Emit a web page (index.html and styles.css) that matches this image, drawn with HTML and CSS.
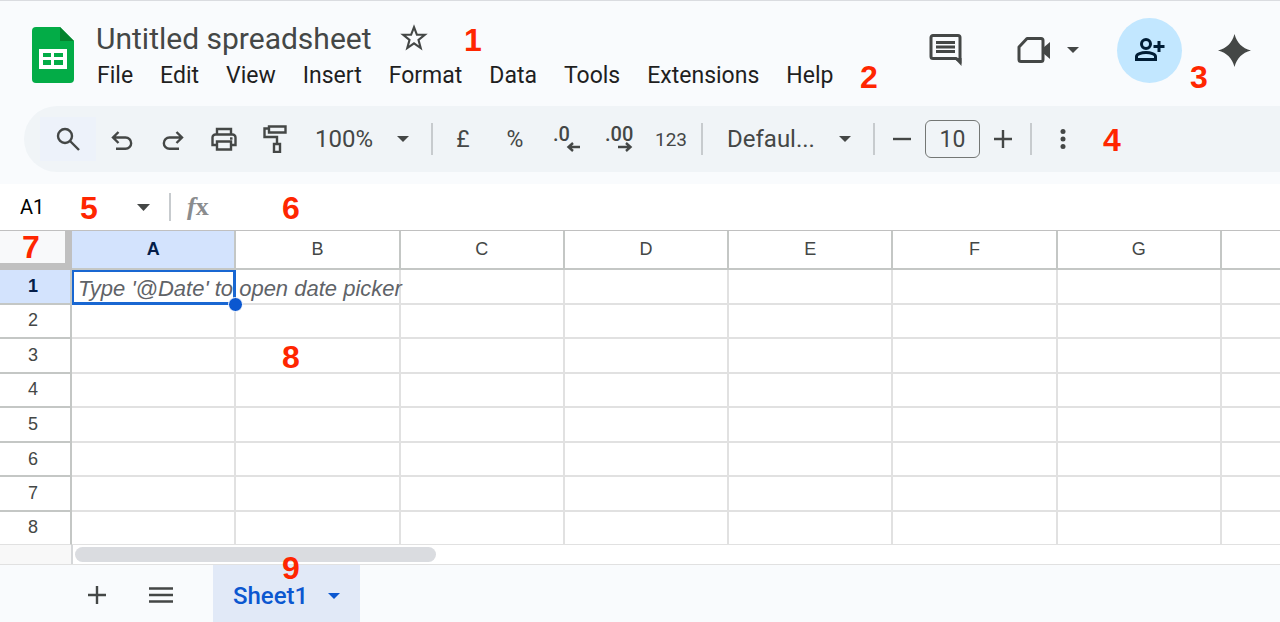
FILE: index.html
```html
<!DOCTYPE html>
<html lang="en">
<head>
  <meta charset="UTF-8">
  <meta name="viewport" content="width=device-width, initial-scale=1">
  <title>Untitled spreadsheet</title>
  <link rel="stylesheet" href="styles.css">
</head>
<body>
  <header class="header">
    <svg class="logo" width="42" height="56" viewBox="0 0 42 56" aria-hidden="true">
      <path d="M4 0h24l14 14v38a4 4 0 0 1-4 4H4a4 4 0 0 1-4-4V4a4 4 0 0 1 4-4z" fill="#03ac47"/>
      <path d="M28 0l14 14H28z" fill="#04832d"/>
      <path d="M7 22h28v20H7zM11 26v4h8v-4zM22 26v4h9v-4zM11 33v5h8v-5zM22 33v5h9v-5z" fill="#fff" fill-rule="evenodd"/>
    </svg>
    <div class="doc">
      <div class="title-row">
        <input class="title" type="text" value="Untitled spreadsheet" aria-label="Document name">
        <button class="icon-btn" aria-label="Star">
          <svg width="28" height="28" viewBox="0 0 26 26"><path d="M13 3l2.700 7h7.300l-5.800 4.800 2 7.500L13 18l-6.200 4.300 2-7.500L3 10h7.300z" fill="none" stroke="#444746" stroke-width="2"/></svg>
        </button>
      </div>
      <nav class="menu">
        <button>File</button>
        <button>Edit</button>
        <button>View</button>
        <button>Insert</button>
        <button>Format</button>
        <button>Data</button>
        <button>Tools</button>
        <button>Extensions</button>
        <button>Help</button>
      </nav>
    </div>
    <div class="actions">
      <button class="icon-btn" aria-label="Comments">
        <svg width="34" height="34" viewBox="0 0 34 34">
          <path d="M4 2.500h25a2 2 0 0 1 2 2V28l-4-2.500H4a2 2 0 0 1-2-2v-19a2 2 0 0 1 2-2z" fill="none" stroke="#444746" stroke-width="3"/>
          <path d="M25 25h7.500v8z" fill="#444746"/>
          <path d="M7 9.500h19M7 14h19M7 18.500h19" stroke="#444746" stroke-width="2.800"/>
        </svg>
      </button>
      <button class="icon-btn meet" aria-label="Join a call">
        <svg width="34" height="28" viewBox="0 0 34 28">
          <path d="M10 2.500h14a2 2 0 0 1 2 2v19a2 2 0 0 1-2 2H4a2 2 0 0 1-2-2V11z" fill="none" stroke="#444746" stroke-width="3" stroke-linejoin="round"/>
          <path d="M26 12l7-6v17l-7-6z" fill="#444746"/>
        </svg>
        <svg width="12" height="6" viewBox="0 0 12 6"><path d="M0 0h12L6 6z" fill="#444746"/></svg>
      </button>
      <button class="share" aria-label="Share">
        <svg width="31" height="24" viewBox="0 0 31 24" fill="none" stroke="#001d35" stroke-width="3">
          <circle cx="12" cy="6" r="4.500"/>
          <path d="M2.500 21.500v-3c0-2.500 5-4 9.500-4s9.500 1.500 9.500 4v3z"/>
          <path d="M25 3v11M19.500 8.500h11"/>
        </svg>
      </button>
      <button class="icon-btn" aria-label="Gemini">
        <svg width="33" height="33" viewBox="0 0 33 33"><path d="M16.500 0c2.500 9 7.500 14 16.500 16.500C24 19 19 24 16.500 33 14 24 9 19 0 16.500 9 14 14 9 16.500 0z" fill="#444746"/></svg>
      </button>
    </div>
  </header>

  <div class="toolbar">
    <button class="tool search" aria-label="Search the menus">
      <svg width="24" height="24" viewBox="0 0 24 24" fill="none" stroke="#444746" stroke-width="2.400"><circle cx="9" cy="9" r="7"/><path d="M14 14l9 9"/></svg>
    </button>
    <button class="tool" aria-label="Undo">
      <svg class="low" width="22" height="20" viewBox="0 0 22 20" fill="none" stroke="#444746" stroke-width="2.400"><path d="M7.500 1L2 6.500 7.500 12M2 6.500h12.500a5.600 5.600 0 0 1 0 11.300H5"/></svg>
    </button>
    <button class="tool" aria-label="Redo">
      <svg class="low" width="22" height="20" viewBox="0 0 22 20" fill="none" stroke="#444746" stroke-width="2.400"><path d="M14.500 1L20 6.500 14.500 12M20 6.500H7.500a5.600 5.600 0 0 0 0 11.300H17"/></svg>
    </button>
    <button class="tool" aria-label="Print">
      <svg width="26" height="24" viewBox="0 0 26 24" fill="none" stroke="#444746" stroke-width="2.400">
        <path d="M6 7V2h14v5M6 18H1.500v-7.500a3 3 0 0 1 3-3h17a3 3 0 0 1 3 3V18H20"/><path d="M6 14.500h14v8H6z"/><path d="M19 11.500h2.500"/>
      </svg>
    </button>
    <button class="tool" aria-label="Paint format">
      <svg width="24" height="28" viewBox="0 0 24 28" fill="none" stroke="#444746" stroke-width="2.400">
        <path d="M6 1.500h16.500v6H6zM6 3.500H1.500v8.500H14v7"/><path d="M11 19h6v8h-6z"/>
      </svg>
    </button>
    <label class="dropdown zoom">
      <select aria-label="Zoom"><option>100%</option></select>
      <svg width="12" height="6" viewBox="0 0 12 6"><path d="M0 0h12L6 6z" fill="#444746"/></svg>
    </label>
    <span class="divider"></span>
    <button class="tool wide symbol">£</button>
    <button class="tool wide symbol">%</button>
    <button class="tool wide" aria-label="Decrease decimal places">
      <svg width="30" height="36" viewBox="0 0 30 36"><text class="decimal" x="1" y="20">.0</text><path d="M28 26H17M21 22l-4.500 4 4.500 4" fill="none" stroke="#444746" stroke-width="2.400"/></svg>
    </button>
    <button class="tool wide" aria-label="Increase decimal places">
      <svg width="30" height="36" viewBox="0 0 30 36"><text class="decimal" x="1" y="20">.00</text><path d="M14 26h12M22 22l4.500 4-4.500 4" fill="none" stroke="#444746" stroke-width="2.400"/></svg>
    </button>
    <button class="tool wide formats">123</button>
    <span class="divider"></span>
    <label class="dropdown font">
      <select aria-label="Font"><option>Defaul...</option></select>
      <svg width="12" height="6" viewBox="0 0 12 6"><path d="M0 0h12L6 6z" fill="#444746"/></svg>
    </label>
    <span class="divider"></span>
    <button class="tool minus" aria-label="Decrease font size">
      <svg width="18" height="18" viewBox="0 0 18 18"><path d="M0 9h18" stroke="#444746" stroke-width="2.400"/></svg>
    </button>
    <input class="font-size" type="text" value="10" aria-label="Font size">
    <button class="tool plus" aria-label="Increase font size">
      <svg width="18" height="18" viewBox="0 0 18 18"><path d="M0 9h18M9 0v18" stroke="#444746" stroke-width="2.400"/></svg>
    </button>
    <span class="divider"></span>
    <button class="tool more" aria-label="More">
      <svg width="6" height="20" viewBox="0 0 6 20" fill="#444746"><circle cx="3" cy="2.500" r="2.500"/><circle cx="3" cy="10" r="2.500"/><circle cx="3" cy="17.500" r="2.500"/></svg>
    </button>
  </div>

  <div class="formula-bar">
    <input class="name-box" type="text" value="A1" aria-label="Name box">
    <button class="icon-btn" aria-label="Named ranges">
      <svg width="13" height="7" viewBox="0 0 13 7"><path d="M0 0h13L6.500 7z" fill="#444746"/></svg>
    </button>
    <span class="divider"></span>
    <label class="fx" for="formula"><em>f</em>x</label>
    <input class="formula" id="formula" type="text">
  </div>

  <table class="grid">
    <colgroup><col class="col-head"><col><col><col><col><col><col><col><col class="col-last"></colgroup>
    <thead>
      <tr>
        <td class="corner"></td>
        <th class="selected">A</th><th>B</th><th>C</th><th>D</th><th>E</th><th>F</th><th>G</th><th></th>
      </tr>
    </thead>
    <tbody>
      <tr>
        <th class="selected">1</th>
        <td class="active"><span class="hint">Type '@Date' to open date picker</span><span class="handle"></span></td>
        <td></td><td></td><td></td><td></td><td></td><td></td><td></td>
      </tr>
      <tr><th>2</th><td></td><td></td><td></td><td></td><td></td><td></td><td></td><td></td></tr>
      <tr><th>3</th><td></td><td></td><td></td><td></td><td></td><td></td><td></td><td></td></tr>
      <tr><th>4</th><td></td><td></td><td></td><td></td><td></td><td></td><td></td><td></td></tr>
      <tr><th>5</th><td></td><td></td><td></td><td></td><td></td><td></td><td></td><td></td></tr>
      <tr><th>6</th><td></td><td></td><td></td><td></td><td></td><td></td><td></td><td></td></tr>
      <tr><th>7</th><td></td><td></td><td></td><td></td><td></td><td></td><td></td><td></td></tr>
      <tr><th>8</th><td></td><td></td><td></td><td></td><td></td><td></td><td></td><td></td></tr>
    </tbody>
  </table>

  <div class="scroll">
    <div class="scroll-corner"></div>
    <div class="scroll-track"><div class="scroll-thumb"></div></div>
  </div>

  <footer class="sheets">
    <button class="icon-btn" aria-label="Add sheet">
      <svg width="18" height="18" viewBox="0 0 18 18"><path d="M0 9h18M9 0v18" stroke="#444746" stroke-width="2.400"/></svg>
    </button>
    <button class="icon-btn" aria-label="All sheets">
      <svg width="24" height="18" viewBox="0 0 24 18"><path d="M0 2.500h24M0 9h24M0 15.500h24" stroke="#444746" stroke-width="2.400"/></svg>
    </button>
    <button class="tab">Sheet1
      <svg width="12" height="6" viewBox="0 0 12 6"><path d="M0 0h12L6 6z" fill="#0b57d0"/></svg>
    </button>
  </footer>

  <!-- numbered callouts -->
  <span class="callout c1">1</span>
  <span class="callout c2">2</span>
  <span class="callout c3">3</span>
  <span class="callout c4">4</span>
  <span class="callout c5">5</span>
  <span class="callout c6">6</span>
  <span class="callout c7">7</span>
  <span class="callout c8">8</span>
  <span class="callout c9">9</span>
</body>
</html>
```
FILE: styles.css
```css
* {
  box-sizing: border-box;
}

body {
  margin: 0;
  position: relative;
  display: flex;
  flex-direction: column;
  min-height: 100vh;
  background: #f9fbfd;
  color: #444746;
  font-family: Roboto, "Liberation Sans", sans-serif;
  overflow-x: hidden;
}

button, input, select {
  margin: 0;
  padding: 0;
  border: none;
  background: none;
  color: inherit;
  font-family: inherit;
}

button {
  cursor: pointer;
}

svg {
  display: block;
}

.icon-btn {
  display: flex;
  align-items: center;
  justify-content: center;
}

/* header */
.header {
  display: flex;
  align-items: flex-start;
  padding: 19px 29px 16px 32px;
  border-top: 1px solid #dadce0;
}

.logo {
  margin-top: 7px;
}

.doc {
  margin-left: 22px;
}

.title-row {
  display: flex;
  align-items: center;
  gap: 24px;
}

.title {
  width: 280px;
  height: 36px;
  font-size: 30px;
}

.menu {
  display: flex;
  gap: 27px;
  margin-top: 6px;
  padding-left: 1px;
}

.menu button {
  color: #1f1f1f;
  font-size: 23px;
  line-height: 28px;
}

.actions {
  display: flex;
  align-items: center;
  height: 60px;
  margin-left: auto;
}

.meet {
  gap: 16px;
  margin: 0 38px 0 54px;
}

.share {
  display: flex;
  align-items: center;
  justify-content: center;
  width: 65px;
  height: 65px;
  margin-right: 36px;
  border-radius: 50%;
  background: #c2e7ff;
}

/* toolbar */
.toolbar {
  display: flex;
  align-items: center;
  height: 66px;
  margin-left: 24px;
  padding-left: 16px;
  border-radius: 33px 0 0 33px;
  background: #f0f4f7;
}

.tool {
  display: flex;
  align-items: center;
  justify-content: center;
  width: 51px;
  height: 44px;
}

.wide {
  width: 52px;
}

.search {
  width: 56px;
  background: #edf2fa;
}

.low {
  margin-top: 4px;
}

.symbol {
  font-size: 23px;
}

.formats {
  font-size: 19px;
}

.decimal {
  fill: #444746;
  font-size: 20px;
  font-weight: 500;
}

.divider {
  width: 2px;
  height: 32px;
  margin: 0 4px;
  background: #c7cbce;
}

.dropdown {
  position: relative;
}

.dropdown select {
  width: 100%;
  height: 44px;
  appearance: none;
  font-size: 24px;
}

.dropdown svg {
  position: absolute;
  top: 19px;
  right: 18px;
  pointer-events: none;
}

.zoom {
  width: 112px;
  margin-left: 15px;
}

.font {
  width: 142px;
  margin-left: 20px;
}

.minus {
  width: 46px;
}

.font-size {
  width: 55px;
  height: 38px;
  border: 1px solid #747775;
  border-radius: 6px;
  font-size: 23px;
  text-align: center;
}

.plus {
  width: 46px;
}

.more {
  width: 54px;
}

/* formula bar */
.formula-bar {
  display: flex;
  align-items: center;
  height: 47px;
  margin-top: 12px;
  padding-left: 20px;
  border-bottom: 1px solid #c0c0c0;
  background: #fff;
}

.formula-bar .divider {
  height: 28px;
  margin: 0 16px 0 19px;
}

.name-box {
  width: 117px;
  color: #000;
  font-size: 20px;
}

.fx {
  width: 30px;
  color: #8a8c8e;
  font-family: "Liberation Serif", serif;
  font-size: 26px;
  font-weight: bold;
}

.formula {
  flex: 1;
  font-size: 20px;
}

/* cells */
.grid {
  width: 100%;
  height: 314px;
  table-layout: fixed;
  border-collapse: separate;
  border-spacing: 0;
  background: #fff;
}

.col-head {
  width: 72px;
}

.col-last {
  width: 58px;
}

.grid th, .grid td {
  padding: 0;
  border: solid #e1e1e1;
  border-width: 0 2px 2px 0;
}

.grid tbody th, .grid thead th {
  border-color: #c4c7c5;
  color: #444746;
  font-family: "Liberation Sans", Arial, sans-serif;
  font-size: 18px;
  font-weight: normal;
}

.grid tbody th {
  padding-right: 4px;
}

.grid thead tr {
  height: 39px;
}

.grid tbody tr:last-child td, .grid tbody tr:last-child th {
  border-bottom-width: 1px;
  border-bottom-color: #e1e1e1;
}

.grid tr > :last-child {
  border-right: none;
}

.grid thead .selected, .grid tbody .selected {
  background: #d3e3fd;
  color: #041e49;
  font-weight: bold;
}

.grid .corner {
  border: solid #c0c0c0;
  border-width: 0 7px 7px 0;
  background: #f8f9fa;
}

.active {
  position: relative;
  box-shadow: inset 2px 2px #1967d2, inset -1px -1px #1967d2;
}

.grid .active {
  border-color: #1967d2;
}

.hint {
  position: absolute;
  top: 6px;
  left: 6px;
  z-index: 1;
  color: #5f6368;
  font: italic 22px/26px "Liberation Sans", Arial, sans-serif;
  white-space: nowrap;
}

.handle {
  position: absolute;
  right: -9px;
  bottom: -9px;
  z-index: 2;
  width: 15px;
  height: 15px;
  border: 1px solid #fff;
  border-radius: 50%;
  background: #0b57d0;
}

/* scrollbar */
.scroll {
  display: flex;
  height: 20px;
  border-bottom: 1px solid #e1e1e1;
  background: #fff;
}

.scroll-corner {
  width: 73px;
  border-right: 2px solid #d5d7d9;
  background: #f8f8f8;
}

.scroll-track {
  flex: 1;
  padding: 2px;
}

.scroll-thumb {
  width: 30%;
  height: 15px;
  border-radius: 8px;
  background: #dadce0;
}

/* sheet tabs */
.sheets {
  display: flex;
  flex: 1;
  align-items: stretch;
  min-height: 57px;
  padding-left: 88px;
}

.sheets .icon-btn {
  padding-top: 3px;
}

.sheets .icon-btn + .icon-btn {
  margin: 0 40px 0 43px;
}

.tab {
  display: flex;
  align-items: center;
  gap: 20px;
  padding: 5px 20px 0;
  background: #e1e9f7;
  color: #0b57d0;
  font-size: 24px;
  font-weight: 500;
  line-height: 24px;
}

/* callouts sit over the interface */
.callout {
  position: absolute;
  z-index: 3;
  color: #ff2600;
  font: bold 32px/24px "Liberation Sans", Arial, sans-serif;
  pointer-events: none;
}

.c1 { left: 464px; top: 28px; }
.c2 { left: 860px; top: 65px; }
.c3 { left: 1190px; top: 65px; }
.c4 { left: 1103px; top: 128px; }
.c5 { left: 80px; top: 196px; }
.c6 { left: 282px; top: 196px; }
.c7 { left: 22px; top: 235px; }
.c8 { left: 282px; top: 345px; }
.c9 { left: 282px; top: 556px; }
```
